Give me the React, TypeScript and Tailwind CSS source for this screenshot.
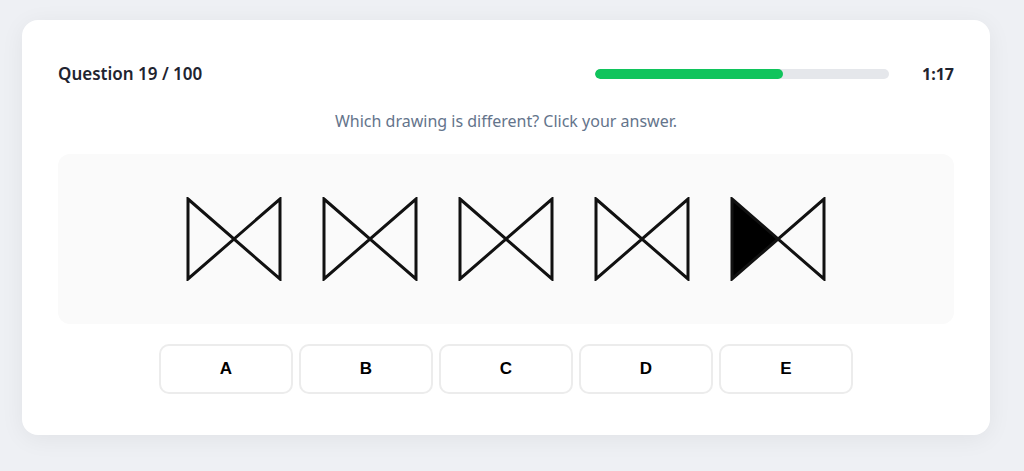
import React from 'react';

const options = ['A', 'B', 'C', 'D', 'E'];

function Bowtie({ filled }: { filled?: boolean }) {
  return (
    <svg width="96" height="84" viewBox="0 0 96 84" fill="none">
      {filled && <polygon points="2,2 48,42 2,82" fill="#000" />}
      <path
        d="M2 2 L94 82 L94 2 L2 82 Z"
        stroke="#111"
        strokeWidth="3"
        strokeLinejoin="miter"
        fill="none"
      />
    </svg>
  );
}

export default function App() {
  const progress = 64;

  return (
    <div className="min-h-screen bg-[#eef0f4] pt-5 px-[22px] font-['Noto_Sans','Open_Sans',sans-serif]">
      <div className="w-[968px] h-[415px] bg-white rounded-2xl shadow-[0_4px_24px_rgba(0,0,0,0.06)] px-9 pt-10">
        <header className="h-7 flex items-center justify-between">
          <h1 className="text-[17px] font-semibold text-[#1f2430]">Question 19 / 100</h1>
          <div className="flex items-center gap-[33px]">
            <div className="w-[294px] h-[10px] rounded-full bg-[#e5e7eb] overflow-hidden">
              <div className="h-full rounded-full bg-[#10c45c]" style={{ width: `${progress}%` }} />
            </div>
            <span className="text-[16px] font-bold text-[#1f2430]">1:17</span>
          </div>
        </header>

        <p className="mt-[22px] h-[22px] leading-[22px] text-center text-[16px] text-[#64748b]">
          Which drawing is different? Click your answer.
        </p>

        <div className="mt-[22px] h-[170px] rounded-xl bg-[#fafafa] flex items-center justify-center gap-[40px]">
          <Bowtie />
          <Bowtie />
          <Bowtie />
          <Bowtie />
          <Bowtie filled />
        </div>

        <div className="mt-5 flex justify-center gap-[6px]">
          {options.map(o => (
            <button
              key={o}
              className="w-[134px] h-[50px] rounded-[10px] border-2 border-[#ececec] bg-white text-[17px] font-bold text-black font-['Liberation_Sans',Arial,sans-serif]"
            >
              {o}
            </button>
          ))}
        </div>
      </div>
    </div>
  );
}
